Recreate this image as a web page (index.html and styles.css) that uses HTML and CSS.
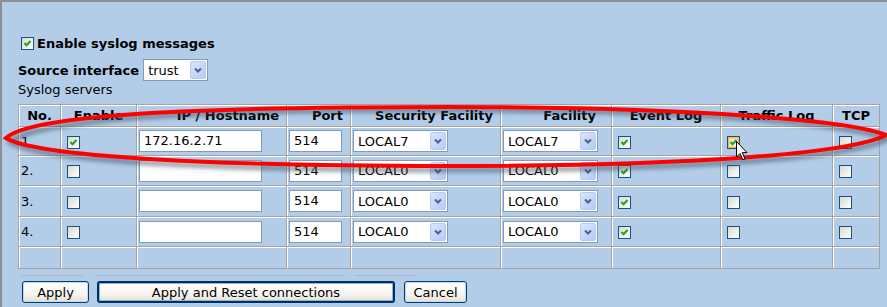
FILE: index.html
```html
<!DOCTYPE html>
<html>
<head>
<meta charset="utf-8">
<title>Syslog</title>
<link rel="stylesheet" href="styles.css">
</head>
<body>
<div class="page">
  <div class="enable-row">
    <span class="cb on"><svg viewBox="0 0 11 11"><polyline points="2.5,5 4.5,7.2 8.5,3"/></svg></span>
    <span class="b">Enable syslog messages</span>
  </div>
  <div class="src-row">
    <span class="b">Source interface</span>
    <span class="select sel-trust"><span class="val">trust</span><span class="dd"><svg viewBox="0 0 8 6"><polyline points="1,1.5 4,4.5 7,1.5"/></svg></span></span>
  </div>
  <div class="caption">Syslog servers</div>

  <table class="grid">
    <thead>
      <tr>
        <th class="w1 c">No.</th>
        <th class="w2 c">Enable</th>
        <th class="w3 r">IP / Hostname</th>
        <th class="w4 r">Port</th>
        <th class="w5 r">Security Facility</th>
        <th class="w6 r rf">Facility</th>
        <th class="w7 c">Event Log</th>
        <th class="w8 c">Traffic Log</th>
        <th class="w9 c">TCP</th>
      </tr>
    </thead>
    <tbody>
      <tr class="h29">
        <td>1.</td>
        <td><span class="cb on"><svg viewBox="0 0 11 11"><polyline points="2.5,5 4.5,7.2 8.5,3"/></svg></span></td>
        <td><span class="inp inp-ip">172.16.2.71</span></td>
        <td><span class="inp inp-port">514</span></td>
        <td><span class="select sel95"><span class="val">LOCAL7</span><span class="dd"><svg viewBox="0 0 8 6"><polyline points="1,1.5 4,4.5 7,1.5"/></svg></span></span></td>
        <td><span class="select sel95"><span class="val">LOCAL7</span><span class="dd"><svg viewBox="0 0 8 6"><polyline points="1,1.5 4,4.5 7,1.5"/></svg></span></span></td>
        <td><span class="cb on"><svg viewBox="0 0 11 11"><polyline points="2.5,5 4.5,7.2 8.5,3"/></svg></span></td>
        <td><span class="cb on hover"><svg viewBox="0 0 11 11"><polyline points="2.5,5 4.5,7.2 8.5,3"/></svg></span></td>
        <td><span class="cb"></span></td>
      </tr>
      <tr class="h30">
        <td>2.</td>
        <td><span class="cb"></span></td>
        <td><span class="inp inp-ip"></span></td>
        <td><span class="inp inp-port">514</span></td>
        <td><span class="select sel95"><span class="val">LOCAL0</span><span class="dd"><svg viewBox="0 0 8 6"><polyline points="1,1.5 4,4.5 7,1.5"/></svg></span></span></td>
        <td><span class="select sel95"><span class="val">LOCAL0</span><span class="dd"><svg viewBox="0 0 8 6"><polyline points="1,1.5 4,4.5 7,1.5"/></svg></span></span></td>
        <td><span class="cb on"><svg viewBox="0 0 11 11"><polyline points="2.5,5 4.5,7.2 8.5,3"/></svg></span></td>
        <td><span class="cb"></span></td>
        <td><span class="cb"></span></td>
      </tr>
      <tr class="h31">
        <td>3.</td>
        <td><span class="cb"></span></td>
        <td><span class="inp inp-ip"></span></td>
        <td><span class="inp inp-port">514</span></td>
        <td><span class="select sel95"><span class="val">LOCAL0</span><span class="dd"><svg viewBox="0 0 8 6"><polyline points="1,1.5 4,4.5 7,1.5"/></svg></span></span></td>
        <td><span class="select sel95"><span class="val">LOCAL0</span><span class="dd"><svg viewBox="0 0 8 6"><polyline points="1,1.5 4,4.5 7,1.5"/></svg></span></span></td>
        <td><span class="cb on"><svg viewBox="0 0 11 11"><polyline points="2.5,5 4.5,7.2 8.5,3"/></svg></span></td>
        <td><span class="cb"></span></td>
        <td><span class="cb"></span></td>
      </tr>
      <tr class="h30">
        <td>4.</td>
        <td><span class="cb"></span></td>
        <td><span class="inp inp-ip"></span></td>
        <td><span class="inp inp-port">514</span></td>
        <td><span class="select sel95"><span class="val">LOCAL0</span><span class="dd"><svg viewBox="0 0 8 6"><polyline points="1,1.5 4,4.5 7,1.5"/></svg></span></span></td>
        <td><span class="select sel95"><span class="val">LOCAL0</span><span class="dd"><svg viewBox="0 0 8 6"><polyline points="1,1.5 4,4.5 7,1.5"/></svg></span></span></td>
        <td><span class="cb on"><svg viewBox="0 0 11 11"><polyline points="2.5,5 4.5,7.2 8.5,3"/></svg></span></td>
        <td><span class="cb"></span></td>
        <td><span class="cb"></span></td>
      </tr>
      <tr class="h21">
        <td></td><td></td><td></td><td></td><td></td><td></td><td></td><td></td><td></td>
      </tr>
    </tbody>
  </table>

  <div class="seps"><span class="sep s1"></span><span class="sep s2"></span><span class="sep s3"></span></div>

  <div class="buttons">
    <button class="xpbtn b-apply">Apply</button>
    <button class="xpbtn b-reset">Apply and Reset connections</button>
    <button class="xpbtn b-cancel">Cancel</button>
  </div>

  <svg class="annot" width="887" height="307" viewBox="0 0 887 307">
    <defs>
      <filter id="sh" x="-5%" y="-50%" width="110%" height="200%">
        <feGaussianBlur stdDeviation="2"/>
      </filter>
    </defs>
    <path class="ell-shadow" filter="url(#sh)" d="M10,142 C40,118 200,110 446,110 C700,110 850,124 888,139 C850,157 700,170 446,170 C200,170 40,160 10,142 Z"/>
    <path class="ell" d="M6,138 C33,114 200,107 446,107 C700,107 850,121 886,135 C852,153 700,166 446,166 C200,166 36,156 6,138 Z"/>
  </svg>

  <svg class="cursor" width="14" height="22" viewBox="0 0 14 22">
    <path d="M1.5,1.5 L1.5,17 L5,13.5 L7.8,19.8 L10,18.8 L7.3,12.6 L12,12.6 Z"/>
  </svg>
</div>
</body>
</html>
```

FILE: styles.css
```css
* { box-sizing: border-box; }
html, body { margin: 0; padding: 0; }
body {
  background: #b3cde9;
  font-family: "DejaVu Sans", Verdana, sans-serif;
  font-size: 13px;
  color: #000;
}
.page {
  position: relative;
  width: 887px;
  height: 307px;
  overflow: hidden;
  padding: 35px 0 0 18px;
  box-shadow: inset 2px 2px 0 #8e8e8e;
}
.b { font-weight: bold; }

.enable-row {
  display: flex;
  align-items: center;
  height: 17px;
  margin-bottom: 7px;
}
.enable-row .cb { margin: 0 3px 0 3px; }

.src-row {
  display: flex;
  align-items: center;
  height: 22px;
}
.src-row .select { margin-left: 4px; }

.caption {
  margin-top: 1px;
  height: 15px;
  line-height: 15px;
  margin-bottom: 7px;
}

/* checkbox */
.cb {
  display: inline-block;
  width: 13px;
  height: 13px;
  border: 1px solid #1c5180;
  background: linear-gradient(135deg, #d8d8d2 0%, #f4f4f0 70%, #ffffff 100%);
  vertical-align: middle;
  position: relative;
}
.cb svg {
  position: absolute;
  left: 0; top: 0;
  width: 11px; height: 11px;
}
.cb polyline {
  fill: none;
  stroke: #21a121;
  stroke-width: 2;
}
.cb.hover {
  box-shadow: inset 0 0 0 1px #f9b93c, inset 0 0 0 2px #fdd889;
}

/* select */
.select {
  display: inline-flex;
  align-items: center;
  justify-content: space-between;
  height: 22px;
  border: 1px solid #7f9db9;
  background: #fff;
  padding: 0 1px 0 4px;
  vertical-align: middle;
}
.sel95 { width: 95px; }
.sel-trust { width: 65px; }
.select .dd {
  width: 16px;
  height: 18px;
  border: 1px solid #b8caf2;
  border-radius: 2px;
  background: linear-gradient(135deg, #dae5fd 0%, #c4d5fb 60%, #b6c9f6 100%);
  display: flex;
  align-items: center;
  justify-content: center;
}
.select .dd svg { width: 8px; height: 6px; }
.select .dd polyline {
  fill: none;
  stroke: #4d6185;
  stroke-width: 2;
}

/* text input */
.inp {
  display: inline-block;
  height: 22px;
  line-height: 20px;
  border: 1px solid #7f9db9;
  background: #fff;
  padding-left: 4px;
  vertical-align: middle;
}
.inp-ip { width: 123px; }
.inp-port { width: 53px; }

/* table */
.grid {
  border-collapse: separate;
  border-spacing: 0;
  table-layout: fixed;
  width: 862px;
  border: 1px solid #a4a4a4;
}
.grid th, .grid td {
  border-right: 1px solid #a4a4a4;
  border-bottom: 1px solid #a4a4a4;
  box-shadow: inset 1px 1px 0 #ffffff;
  padding: 0 0 0 2px;
  vertical-align: middle;
  white-space: nowrap;
  text-align: left;
}
.grid tr > *:last-child { border-right: 0; }
.grid tbody tr:last-child td { border-bottom: 0; }
.grid th { font-weight: bold; height: 22px; }
.grid th.c { text-align: center; padding: 0; }
.grid th.r { text-align: right; padding: 0 7px 0 0; }
.grid th.rf { padding-right: 15px; }
.grid td .cb { margin-left: 4px; }

.w1 { width: 42px; }
.w2 { width: 76px; }
.w3 { width: 150px; }
.w4 { width: 64px; }
.w5 { width: 150px; }
.w6 { width: 111px; }
.w7 { width: 109px; }
.w8 { width: 112px; }
.w9 { width: 46px; }

.h29 td { height: 29px; }
.h30 td { height: 30px; }
.h31 td { height: 31px; }
.h21 td { height: 21px; }

/* separators */
.seps {
  display: flex;
  height: 1px;
  margin-top: 6px;
}
.sep { height: 1px; background: #a6b7cc; }
.s1 { margin-left: 3px; width: 62px; }
.s2 { margin-left: 14px; width: 246px; }
.s3 { margin-left: 13px; width: 59px; }

/* buttons */
.buttons {
  display: flex;
  margin-top: 5px;
  padding-left: 4px;
}
.xpbtn {
  font-family: "DejaVu Sans", Verdana, sans-serif;
  font-size: 13px;
  color: #000;
  height: 22px;
  padding: 0;
  border: 1px solid #003c74;
  border-radius: 3px;
  background: linear-gradient(#ffffff 0%, #f6f5f0 60%, #e3e0d4 100%);
  box-shadow: inset 0 0 0 1px #c6d8f0;
}
.b-apply { width: 67px; }
.b-reset {
  width: 298px;
  margin-left: 8px;
  border: 2px solid #00305f;
  box-shadow: inset 0 0 0 1px #8fb2e6;
}
.b-cancel { width: 63px; margin-left: 9px; }

/* annotation overlay */
.annot {
  position: absolute;
  left: 0;
  top: 0;
  pointer-events: none;
}
.ell {
  fill: none;
  stroke: #ff0000;
  stroke-width: 4;
}
.ell-shadow {
  fill: none;
  stroke: #3a4a5a;
  stroke-opacity: 0.55;
  stroke-width: 5;
}
.cursor {
  position: absolute;
  left: 735px;
  top: 140px;
  pointer-events: none;
}
.cursor path {
  fill: #ffffff;
  stroke: #000000;
  stroke-width: 1;
  stroke-linejoin: miter;
}
```
